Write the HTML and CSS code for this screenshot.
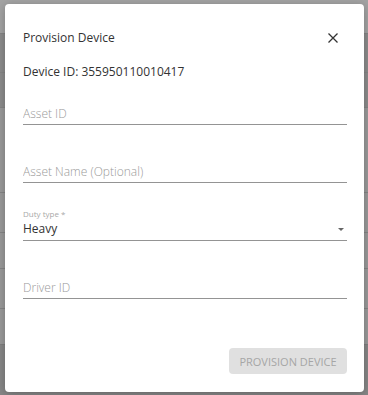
FILE: index.html
```html
<!DOCTYPE html>
<html>
  <head>
    <meta charset="utf-8" />
    <title>Provision Device</title>
    <meta name="viewport" content="width=device-width, initial-scale=1" />
    <link rel="stylesheet" href="styles.css">
  </head>
  <body>
    <div class="backdrop">
      <div class="bg-top"></div>
      <div class="bg-row dark"></div>
      <div class="bg-row dark short"></div>
      <div class="bg-row tall"></div>
      <div class="bg-row"></div>
      <div class="bg-row short"></div>
      <div class="bg-row"></div>
      <div class="bg-row short"></div>
      <div class="bg-bottom"></div>
    </div>

    <div class="dialog">
      <div class="dialog-head">
        <h3>Provision Device</h3>
        <button class="close" type="button" aria-label="Close">
          <svg width="10" height="10" viewBox="0 0 10 10">
            <path d="M0.5 0.5L9.5 9.5M9.5 0.5L0.5 9.5" stroke="#333" stroke-width="1.3" fill="none" />
          </svg>
        </button>
      </div>
      <div class="device-id">Device ID: 355950110010417</div>

      <form id="provision-form" class="fields">
        <div class="field">
          <input type="text" name="asset_id" placeholder="Asset ID" />
        </div>
        <div class="field">
          <input type="text" name="asset_name" placeholder="Asset Name (Optional)" />
        </div>
        <div class="field select">
          <label>Duty type *</label>
          <div class="select-value">
            <span>Heavy</span>
            <span class="arrow"></span>
          </div>
        </div>
        <div class="field">
          <input type="text" name="driver_id" placeholder="Driver ID" />
        </div>
      </form>

      <div class="actions">
        <button type="button" disabled>PROVISION DEVICE</button>
      </div>
    </div>
  </body>
</html>
```

FILE: styles.css
```css
body {
  margin: 0;
  padding: 0;
  font-family: "Open Sans", Arial, sans-serif;
  background-color: #888888;
  width: 368px;
  height: 395px;
  overflow: hidden;
}
.backdrop {
  display: flex;
  flex-direction: column;
  height: 395px;
}
.bg-top {
  height: 33px;
  background-color: #a3a3a3;
}
.bg-row {
  height: 40px;
  background-color: #9a9a9a;
  border-top: 1px solid #858585;
  box-sizing: border-box;
}
.bg-row.short {
  height: 36px;
}
.bg-row.tall {
  height: 85px;
}
.bg-row.dark {
  height: 39px;
  background-color: #8c8c8c;
}
.bg-row.dark.short {
  height: 35px;
}
.bg-bottom {
  flex: 1;
  background-color: #878787;
  border-top: 1px solid #7f7f7f;
}
.dialog {
  position: absolute;
  left: 5px;
  top: 4px;
  width: 359px;
  height: 388px;
  box-sizing: border-box;
  background: white;
  border-radius: 4px;
  box-shadow: 0 2px 10px rgba(0, 0, 0, 0.25);
  padding: 26px 17px 18px 18px;
  display: flex;
  flex-direction: column;
}
.dialog-head {
  display: flex;
  justify-content: space-between;
  align-items: center;
  height: 16px;
}
.dialog-head h3 {
  margin: 0;
  font-size: 12px;
  font-weight: normal;
  line-height: 16px;
  color: #333;
}
.close {
  border: none;
  background: none;
  padding: 0;
  margin-right: 9px;
  width: 10px;
  height: 10px;
  display: flex;
  cursor: pointer;
}
.device-id {
  margin-top: 18px;
  font-size: 12px;
  line-height: 16px;
  color: #333;
}
.fields {
  display: flex;
  flex-direction: column;
  gap: 26px;
  margin-top: 13px;
}
.field {
  padding-top: 12px;
}
.field input[type="text"] {
  display: block;
  width: 100%;
  box-sizing: border-box;
  border: none;
  border-bottom: 1px solid #949494;
  padding: 0 0 3px 0;
  margin: 0;
  font-family: "Open Sans", Arial, sans-serif;
  font-size: 12px;
  line-height: 16px;
  height: 20px;
  color: #333;
  outline: none;
}
.field input::placeholder {
  color: #9a9a9a;
  font-weight: 300;
}
.field.select {
  padding-top: 0;
}
.field.select label {
  display: block;
  font-size: 8px;
  line-height: 10px;
  color: #a8a8a8;
  margin-bottom: 2px;
}
.select-value {
  display: flex;
  justify-content: space-between;
  align-items: center;
  font-size: 12px;
  line-height: 16px;
  color: #333;
  padding-bottom: 3px;
  border-bottom: 1px solid #949494;
}
.arrow {
  width: 0;
  height: 0;
  border-left: 3px solid transparent;
  border-right: 3px solid transparent;
  border-top: 3px solid #666;
  margin-right: 3px;
}
.actions {
  margin-top: auto;
  display: flex;
  justify-content: flex-end;
}
.actions button {
  width: 118px;
  height: 26px;
  padding: 0;
  border: none;
  border-radius: 4px;
  background-color: #e0e0e0;
  color: #a6a6a6;
  font-family: "Open Sans", Arial, sans-serif;
  font-size: 11px;
  cursor: not-allowed;
}
```
